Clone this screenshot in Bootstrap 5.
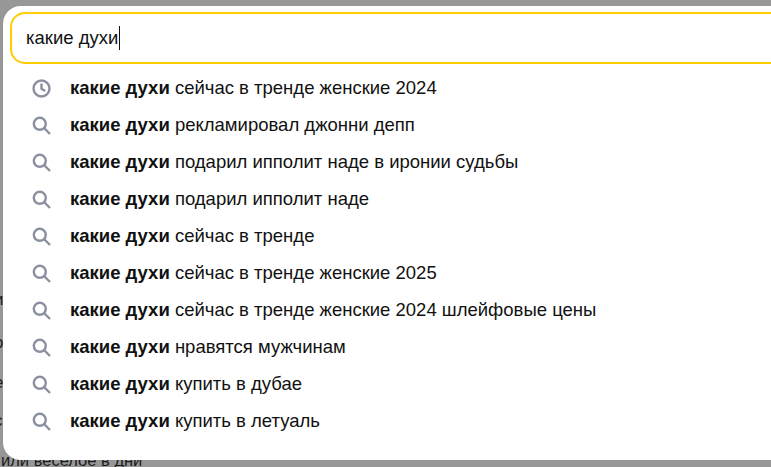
<!DOCTYPE html>
<html lang="ru">
<head>
    <meta charset="UTF-8">
    <title>какие духи</title>
    <link href="https://cdn.jsdelivr.net/npm/bootstrap@5.3.0/dist/css/bootstrap.min.css" rel="stylesheet">
    <style>
        html, body { height: 100%; }
        body {
            background: #979797;
            font-family: "Liberation Sans", Arial, sans-serif;
            overflow: hidden;
        }
        .page-behind {
            position: absolute;
            left: 1px;
            top: 450px;
            font-size: 16.5px;
            line-height: 20px;
            color: #1c1c1c;
            white-space: nowrap;
        }
        .edge-glyph {
            position: absolute;
            left: -6px;
            font-size: 17px;
            line-height: 20px;
            color: #222;
        }
        .suggest-panel {
            position: absolute;
            left: 3px;
            top: 6px;
            width: 800px;
            height: 454px;
            background: #fff;
            border-radius: 18px 0 0 18px;
            padding: 6px 0 0 7px;
        }
        .search-box {
            height: 52px;
            border: 2px solid #fc0;
            border-radius: 15px;
            padding-left: 14px;
            font-size: 18.5px;
            color: #111;
        }
        .caret-bar {
            width: 1px;
            height: 24px;
            background: #111;
            margin-left: 1px;
        }
        .suggest-list {
            padding: 5px 0 0 0;
            margin: 0;
            list-style: none;
        }
        .suggest-row {
            height: 37px;
            font-size: 18.5px;
            color: #111;
            gap: 19px;
            padding-left: 22px;
        }
        .suggest-row svg { flex: none; margin-top: 2px; }
        .suggest-row b { font-weight: 700; }
    </style>
</head>
<body>
    <div class="page-behind">или веселое в дни</div>
    <span class="edge-glyph" style="top:290px">и</span>
    <span class="edge-glyph" style="top:333px">о</span>
    <span class="edge-glyph" style="top:373px">е</span>
    <span class="edge-glyph" style="top:411px">с</span>

    <div class="suggest-panel">
        <div class="search-box d-flex align-items-center">
            <span>какие духи</span><span class="caret-bar"></span>
        </div>
        <ul class="suggest-list" id="list"></ul>
    </div>

    <script>
        const rest = [
            'сейчас в тренде женские 2024',
            'рекламировал джонни депп',
            'подарил ипполит наде в иронии судьбы',
            'подарил ипполит наде',
            'сейчас в тренде',
            'сейчас в тренде женские 2025',
            'сейчас в тренде женские 2024 шлейфовые цены',
            'нравятся мужчинам',
            'купить в дубае',
            'купить в летуаль'
        ];
        const clock = '<svg width="19" height="19" viewBox="0 0 19 19" fill="none" stroke="#8a90a0" stroke-width="2.4"><circle cx="9.5" cy="9.5" r="8"/><path d="M9.5 4.5v5.2l3.6 2.4"/></svg>';
        const glass = '<svg width="19" height="19" viewBox="0 0 19 19" fill="none" stroke="#8a90a0" stroke-width="2.4"><circle cx="7.8" cy="7.8" r="6"/><path d="M12 12l6 6"/></svg>';
        document.getElementById('list').innerHTML = rest.map((t, i) =>
            `<li class="suggest-row d-flex align-items-center">${i === 0 ? clock : glass}<span><b>какие духи</b> ${t}</span></li>`
        ).join('');
    </script>
    <script src="https://cdn.jsdelivr.net/npm/bootstrap@5.3.0/dist/js/bootstrap.bundle.min.js"></script>
</body>
</html>
